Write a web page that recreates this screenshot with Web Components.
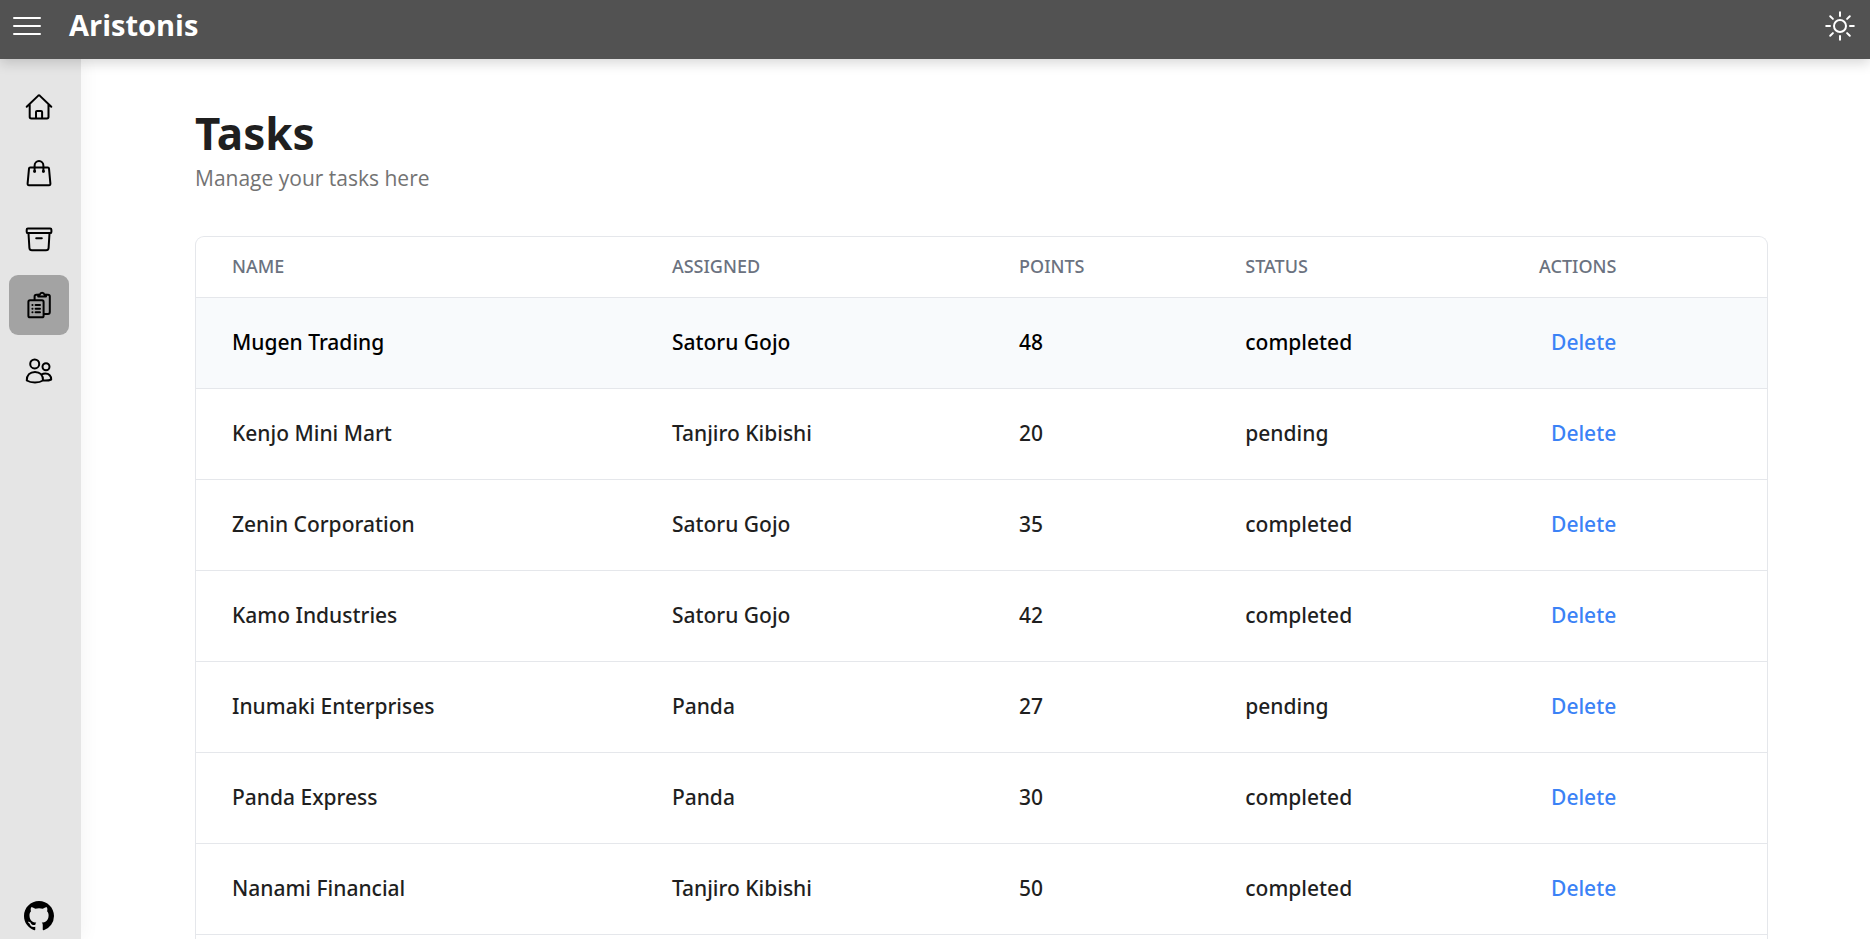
<!DOCTYPE html>
<html lang="en">
<head>
<meta charset="utf-8">
<meta name="viewport" content="width=device-width, initial-scale=1">
<title>Aristonis – Tasks</title>
<style>
  body { margin: 0; background: #fff; color: #1f1f1f; font-family: "Open Sans", "Noto Sans", sans-serif; }
</style>
</head>
<body>
<aristonis-app></aristonis-app>
<script>
const make = (name, html, setup) => {
  const template = document.createElement('template');
  template.innerHTML = html;
  customElements.define(name, class extends HTMLElement {
    constructor() {
      super();
      this.attachShadow({ mode: 'open' }).append(template.content.cloneNode(true));
    }
    connectedCallback() { if (setup) setup(this, this.shadowRoot); }
  });
};

const ICONS = {
  menu: '<path d="M3 8H29M3 16H29M3 24H29"/>',
  sun: '<circle cx="16" cy="16" r="6"/><path d="M16 2.2V6M16 26v3.8M2.2 16H6M26 16h3.8M6.2 6.2l2.7 2.7M23.1 23.1l2.7 2.7M6.2 25.8l2.7-2.7M23.1 8.9l2.7-2.7"/>',
  home: '<path d="M3.7 15.7 L15.3 4.6 Q16 4 16.7 4.6 L28.3 15.7M6.7 13.5V26Q6.7 27.4 8.3 27.4H23.9Q25.5 27.4 25.5 26V13.5M13 27.3V21Q13 19.9 14.1 19.9H18Q19.1 19.9 19.1 21V27.3"/>',
  bag: '<path d="M7.2 10.6H24.8Q25.9 10.6 26 11.7L27.4 26.6Q27.5 28.2 26 28.2H6Q4.5 28.2 4.6 26.6L6 11.7Q6.1 10.6 7.2 10.6ZM11.6 14.5V8.7A4.4 4.6 0 0 1 20.4 8.7V14.5"/><circle cx="11.6" cy="14.3" r=".5"/><circle cx="20.4" cy="14.3" r=".5"/>',
  archive: '<rect x="3.7" y="5.5" width="24.7" height="4.6" rx="1.2"/><path d="M5.5 10.3L6.4 25Q6.6 27.3 9 27.3H23Q25.4 27.3 25.6 25L26.5 10.3M13.2 15.2H18.8"/>',
  tasks: '<path d="M11.6 10.8V7.6Q11.6 5.8 13.4 5.8H15.3M22.9 5.8H25Q26.8 5.8 26.8 7.6V23Q26.8 24.9 25 24.9H21"/><path d="M15.2 7.6V5.7H16.7Q17.3 3.8 19.1 3.8T21.5 5.7H23V7.6Z"/><rect x="5.4" y="11.3" width="15.2" height="17" rx="1.6"/><path d="M12.6 16.1H17M12.6 19.7H17M12.6 23.3H17M9.4 16.1h.1M9.4 19.7h.1M9.4 23.3h.1"/>',
  people: '<circle cx="11.7" cy="8.9" r="4.5"/><circle cx="23" cy="11.7" r="3.5"/><path d="M3.8 25.5C3.6 20 7 16.9 12 16.9S20.2 20 20 25.5C18 26.8 15.5 27.5 12 27.5S5.8 26.8 3.8 25.5ZM18.5 19.8C19.6 18.9 21 18.6 22.5 18.6C26 18.6 28.3 21 28.2 24.5C26 25.6 23.5 25.7 20.3 25.5"/>'
};

make('app-icon', `
  <style>
    :host { display: block; width: 32px; height: 32px; }
    svg { display: block; width: 100%; height: 100%; fill: none; stroke: currentColor; stroke-width: 2; stroke-linecap: round; stroke-linejoin: round; }
  </style>
  <svg viewBox="0 0 32 32" aria-hidden="true"></svg>`,
  (el, root) => { root.querySelector('svg').innerHTML = ICONS[el.getAttribute('name')]; });

make('app-header', `
  <style>
    :host { display: flex; align-items: center; box-sizing: border-box; height: 59px; padding: 0 14px 7px 11px; background: #525252; color: #fff; box-shadow: 0 4px 12px rgba(0,0,0,.16); position: relative; z-index: 2; }
    button { border: 0; padding: 0; background: none; color: inherit; cursor: pointer; }
    a { margin-left: 26px; margin-right: auto; padding-bottom: 2px; color: inherit; text-decoration: none; font-size: 29px; font-weight: 700; line-height: 36px; }
  </style>
  <button type="button" aria-label="Toggle menu"><app-icon name="menu"></app-icon></button>
  <a href="#">Aristonis</a>
  <button type="button" aria-label="Toggle theme"><app-icon name="sun"></app-icon></button>`);

make('side-link', `
  <style>
    :host { display: block; }
    a { display: grid; place-items: center; width: 60px; height: 60px; border-radius: 9px; color: #000; }
    :host([active]) a { background: #a3a3a3; }
  </style>
  <a href="#"><app-icon></app-icon></a>`,
  (el, root) => {
    root.querySelector('a').setAttribute('aria-label', el.getAttribute('label'));
    const icon = document.createElement('app-icon');
    icon.setAttribute('name', el.getAttribute('icon'));
    root.querySelector('app-icon').replaceWith(icon);
  });

make('side-bar', `
  <style>
    :host { display: flex; flex-direction: column; justify-content: space-between; box-sizing: border-box; padding: 18px 12px 8px 9px; background: #e5e5e5; box-shadow: 4px 0 16px rgba(0,0,0,.04); }
    nav { display: flex; flex-direction: column; gap: 6px; }
    .github { align-self: center; color: #000; }
    .github svg { display: block; width: 30px; height: 30px; }
  </style>
  <nav aria-label="Main">
    <side-link icon="home" label="Home"></side-link>
    <side-link icon="bag" label="Shop"></side-link>
    <side-link icon="archive" label="Inventory"></side-link>
    <side-link icon="tasks" label="Tasks" active></side-link>
    <side-link icon="people" label="Employees"></side-link>
  </nav>
  <a class="github" href="#" aria-label="GitHub"><svg viewBox="0 0 16 16" fill="currentColor" aria-hidden="true"><path d="M8 0C3.58 0 0 3.58 0 8c0 3.54 2.29 6.53 5.47 7.59.4.07.55-.17.55-.38 0-.19-.01-.82-.01-1.49-2.01.37-2.53-.49-2.69-.94-.09-.23-.48-.94-.82-1.13-.28-.15-.68-.52-.01-.53.63-.01 1.08.58 1.23.82.72 1.21 1.87.87 2.33.66.07-.52.28-.87.51-1.07-1.78-.2-3.64-.89-3.64-3.95 0-.87.31-1.59.82-2.15-.08-.2-.36-1.02.08-2.12 0 0 .67-.21 2.2.82.64-.18 1.32-.27 2-.27s1.36.09 2 .27c1.53-1.04 2.2-.82 2.2-.82.44 1.1.16 1.92.08 2.12.51.56.82 1.27.82 2.15 0 3.07-1.87 3.75-3.65 3.95.29.25.54.73.54 1.48 0 1.07-.01 1.93-.01 2.2 0 .21.15.46.55.38A8.01 8.01 0 0 0 16 8c0-4.42-3.58-8-8-8z"/></svg></a>`);

make('page-title', `
  <style>
    :host { display: block; }
    h1 { margin: 0; font-family: "Noto Sans", sans-serif; font-size: 44px; line-height: 56px; font-weight: 700; }
    p { margin: 0; font-size: 21px; line-height: 34px; color: #737373; }
  </style>
  <h1><slot></slot></h1>
  <p><slot name="subtitle"></slot></p>`);

const TASKS = [
  ['Mugen Trading', 'Satoru Gojo', 48, 'completed'],
  ['Kenjo Mini Mart', 'Tanjiro Kibishi', 20, 'pending'],
  ['Zenin Corporation', 'Satoru Gojo', 35, 'completed'],
  ['Kamo Industries', 'Satoru Gojo', 42, 'completed'],
  ['Inumaki Enterprises', 'Panda', 27, 'pending'],
  ['Panda Express', 'Panda', 30, 'completed'],
  ['Nanami Financial', 'Tanjiro Kibishi', 50, 'completed']
];

make('task-table', `
  <style>
    :host { display: block; border: 1px solid #e5e7eb; border-bottom: 0; border-radius: 9px 9px 0 0; overflow: hidden; }
    table { width: 100%; table-layout: fixed; border-collapse: separate; border-spacing: 0; text-align: left; font-family: "Noto Sans", sans-serif; font-weight: 500; }
    th, td { box-sizing: border-box; padding: 0 0 2px 36px; border-bottom: 1px solid #e5e7eb; }
    th { height: 61px; font-size: 18px; font-weight: 500; color: #6b7280; }
    td { height: 91px; font-size: 21px; line-height: 30px; }
    tr.current td { background: #f8fafc; color: #000; }
    button { border: 0; padding: 0 12px; background: none; font: inherit; color: #3b82f6; cursor: pointer; }
  </style>
  <table>
    <colgroup><col style="width:28%"><col style="width:22.1%"><col style="width:14.4%"><col style="width:18.7%"><col style="width:16.8%"></colgroup>
    <thead><tr><th>NAME</th><th>ASSIGNED</th><th>POINTS</th><th>STATUS</th><th>ACTIONS</th></tr></thead>
    <tbody></tbody>
  </table>`,
  (el, root) => {
    root.querySelector('tbody').innerHTML = TASKS.map((task, i) =>
      `<tr${i === 0 ? ' class="current"' : ''}>${task.map(v => `<td>${v}</td>`).join('')}<td><button type="button">Delete</button></td></tr>`).join('');
  });

make('aristonis-app', `
  <style>
    :host { display: flex; flex-direction: column; min-height: 100vh; }
    .body { display: flex; flex: 1; }
    side-bar { flex: none; }
    main { flex: 1; min-width: 0; display: flex; flex-direction: column; gap: 41px; padding: 46px 102px 0 114px; }
    task-table { flex: 1; }
  </style>
  <app-header></app-header>
  <div class="body">
    <side-bar></side-bar>
    <main>
      <page-title>Tasks<span slot="subtitle">Manage your tasks here</span></page-title>
      <task-table></task-table>
    </main>
  </div>`);
</script>
</body>
</html>
